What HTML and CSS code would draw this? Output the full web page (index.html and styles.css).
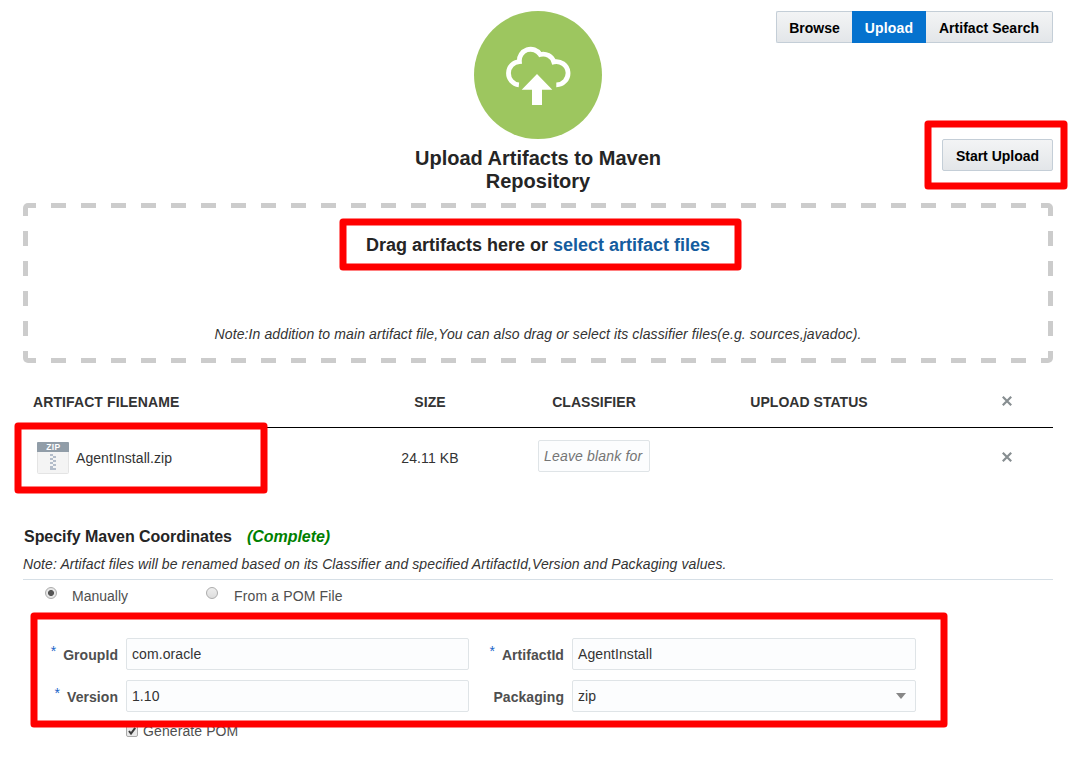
FILE: index.html
```html
<!DOCTYPE html>
<html lang="en">
<head>
<meta charset="utf-8">
<title>Upload Artifacts</title>
<link rel="stylesheet" href="styles.css">
</head>
<body>
<main class="page">
  <header class="head">
    <div class="intro">
      <svg class="badge" viewBox="0 0 128 128">
        <circle cx="64" cy="64" r="64" fill="#9dc65f"/>
        <path d="M44.9 73.9A11.7 11.7 0 0 1 45.4 50.6A11.3 11.3 0 0 1 66.2 43.5A11.2 11.2 0 0 1 79.8 50.9A11.6 11.6 0 1 1 82.3 73.8" fill="none" stroke="#fff" stroke-width="4.8"/>
        <path d="M63 63L78.3 78.8H68V94H58V78.8H47.7Z" fill="#fff"/>
      </svg>
      <h1 class="title">Upload Artifacts to Maven Repository</h1>
    </div>
    <div class="actions">
      <nav class="tabs">
        <button class="btn tab tab-browse">Browse</button><button class="btn tab tab-on">Upload</button><button class="btn tab tab-search">Artifact Search</button>
      </nav>
      <button class="btn start">Start Upload</button>
    </div>
  </header>

  <section class="drop">
    <svg class="dashes" viewBox="0 0 1030 160">
      <path d="M0 2.5H1030M0 157.5H1030M2.5 0V160M1027.5 0V160"/>
    </svg>
    <p class="drag">Drag artifacts here or <a class="link">select artifact files</a></p>
    <p class="note">Note:In addition to main artifact file,You can also drag or select its classifier files(e.g. sources,javadoc).</p>
  </section>

  <section class="table">
    <div class="row row-head">
      <div class="first">ARTIFACT FILENAME</div><div>SIZE</div><div>CLASSIFIER</div><div>UPLOAD STATUS</div>
      <div><svg class="x" viewBox="0 0 10 10"><path d="M.8 .8L9.2 9.2M9.2 .8L.8 9.2"/></svg></div>
    </div>
    <div class="row row-file">
      <div class="first file">
        <svg class="zip" viewBox="0 0 32 32">
          <rect x=".5" y=".5" width="31" height="31" rx="1" fill="#f4f4f4" stroke="#e4e4e4"/>
          <path d="M0 10V1a1 1 0 0 1 1-1H31a1 1 0 0 1 1 1V10Z" fill="#919da8"/>
          <text x="16.3" y="8" class="zip-text">ZIP</text>
          <path d="M13 12h3v2h-3zM16 14h3v2h-3zM13 16h3v2h-3zM16 18h3v2h-3zM13 20h3v2h-3zM16 22h3v2h-3zM13 24h3v2h3v2h-6z" fill="#b4bdca"/>
        </svg>
        <span>AgentInstall.zip</span>
      </div>
      <div class="size">24.11 KB</div>
      <div><div class="field blank">Leave blank for</div></div>
      <div></div>
      <div><svg class="x" viewBox="0 0 10 10"><path d="M.8 .8L9.2 9.2M9.2 .8L.8 9.2"/></svg></div>
    </div>
  </section>

  <section class="coords">
    <h2 class="subtitle"><span>Specify Maven Coordinates</span><em class="done">(Complete)</em></h2>
    <p class="hint">Note: Artifact files will be renamed based on its Classifier and specified ArtifactId,Version and Packaging values.</p>
    <div class="modes">
      <label class="mode"><i class="radio radio-on"></i><span>Manually</span></label>
      <label class="mode mode-pom"><i class="radio"></i><span>From a POM File</span></label>
    </div>
    <div class="form">
      <label class="label"><b class="star">*</b><span>GroupId</span></label><div class="field">com.oracle</div>
      <label class="label"><b class="star">*</b><span>ArtifactId</span></label><div class="field">AgentInstall</div>
      <label class="label"><b class="star">*</b><span>Version</span></label><div class="field">1.10</div>
      <label class="label"><span>Packaging</span></label><div class="field select"><span>zip</span><svg class="caret" viewBox="0 0 10 6"><path d="M0 0H10L5 6Z"/></svg></div>
    </div>
    <div class="pom">
      <svg class="check" viewBox="0 0 12 12"><rect x=".5" y=".5" width="11" height="11" rx="1.5" fill="#e9e9e9" stroke="#a9a9a9"/><path d="M3 6L5 8.6L9.2 2.8" fill="none" stroke="#3c3c3c" stroke-width="2"/></svg>
      <span>Generate POM</span>
    </div>
  </section>

  <svg class="marks" viewBox="0 0 1074 760">
    <rect x="928" y="124" width="136" height="62"/>
    <rect x="343" y="222" width="395" height="45"/>
    <rect x="18" y="426" width="246" height="64"/>
    <rect x="34" y="616" width="910" height="108"/>
  </svg>
</main>
</body>
</html>
```
FILE: styles.css
```css
* { box-sizing: border-box; }
body { margin: 0; background: #fff; color: #333; font: 14px/16px "Liberation Sans", Arial, sans-serif; }
h1, h2, p { margin: 0; }
.page { position: relative; width: 1074px; height: 760px; padding: 11px 21px 0 23px; overflow: hidden; }
.head { display: grid; grid-template-columns: 1fr 260px 1fr; height: 192px; }
.intro { grid-column: 2; display: flex; flex-direction: column; align-items: center; text-align: center; }
.badge { width: 128px; height: 128px; flex: none; }
.title { width: 260px; margin-top: 8px; font-size: 20px; line-height: 23px; color: #252525; }
.actions { display: flex; flex-direction: column; align-items: flex-end; gap: 96px; }
.tabs { display: flex; }
.btn { height: 32px; padding: 2px 0 0; border: 1px solid #c4ced7; border-radius: 2px; background: linear-gradient(#f3f4f5, #e3e6e9); color: #000; font: bold 14px/16px "Liberation Sans", Arial, sans-serif; white-space: nowrap; }
.tab-browse { width: 76px; border-right: 0; border-radius: 2px 0 0 2px; }
.tab-search { width: 127px; border-left: 0; border-radius: 0 2px 2px 0; letter-spacing: .04px; }
.tab-on { width: 74px; border-color: #0572ce; border-radius: 0; background: #0572ce; color: #fff; letter-spacing: .15px; }
.start { width: 111px; }
.drop { position: relative; width: 1030px; height: 160px; padding-top: 32px; text-align: center; }
.dashes { position: absolute; inset: 0; width: 1030px; height: 160px; border-radius: 5px; }
.dashes path { fill: none; stroke: #ccc; stroke-width: 5; stroke-dasharray: 15 15; stroke-dashoffset: 2; }
.drag { font-size: 18px; line-height: 21px; font-weight: bold; color: #252525; }
.link { color: #145c9e; }
.note { margin-top: 70px; font-style: italic; letter-spacing: .108px; }
.table { margin-top: 14px; width: 1030px; }
.row { display: grid; grid-template-columns: 306px 202px 126px 304px 92px; align-items: center; text-align: center; }
.row-head { height: 51px; border-bottom: 1px solid #000; font-weight: bold; letter-spacing: .04px; }
.row-head .first { letter-spacing: .1px; }
.row-file { height: 60px; }
.first { padding-left: 10px; text-align: left; }
.file { display: flex; align-items: center; gap: 7px; padding-left: 14px; letter-spacing: .07px; }
.size { letter-spacing: .12px; }
.zip { width: 32px; height: 32px; }
.zip-text { fill: #fff; font: bold 8.5px "Liberation Sans", Arial, sans-serif; letter-spacing: .3px; text-anchor: middle; }
.x { width: 10px; height: 10px; margin-bottom: 1px; }
.x path { fill: none; stroke: #878e91; stroke-width: 2.2; }
.field { display: flex; align-items: center; height: 32px; padding: 0 5px; border: 1px solid #dfe4e7; border-radius: 2px; background: #fcfdfe; letter-spacing: .08px; white-space: nowrap; }
.blank { width: 112px; margin: 0 auto 4px; color: #757575; font-style: italic; letter-spacing: .18px; }
.coords { margin-top: 39px; width: 1030px; }
.subtitle { display: flex; gap: 15px; padding-left: 1px; font-size: 16px; line-height: 19px; letter-spacing: -.04px; color: #252525; }
.done { color: #008000; }
.hint { margin-top: 10px; height: 24px; border-bottom: 1px solid #d6dfe6; font-style: italic; letter-spacing: .095px; }
.modes { display: flex; padding: 7px 0 0 22px; height: 58px; }
.mode { display: flex; align-items: flex-start; gap: 15px; width: 161px; color: #4f4f4f; white-space: nowrap; }
.mode span { padding-top: 1px; }
.mode-pom { gap: 16px; letter-spacing: .14px; }
.radio { width: 12px; height: 12px; border: 1px solid #acacac; border-radius: 50%; background: linear-gradient(#eee, #ddd); }
.radio-on { background: radial-gradient(circle, #555 0 2.6px, #e6e6e6 3.4px); }
.form { display: grid; grid-template-columns: 95px 343px 87px 344px; column-gap: 8px; row-gap: 10px; }
.label { display: flex; justify-content: flex-end; align-items: center; gap: 7px; padding-top: 2px; color: #4f4f4f; font-weight: bold; letter-spacing: .06px; white-space: nowrap; }
.star { align-self: flex-start; margin-top: 3px; color: #1b66c9; font-weight: normal; }
.select { justify-content: space-between; padding-right: 9px; }
.caret { width: 10px; height: 6px; fill: #878787; }
.pom { display: flex; align-items: center; gap: 5px; padding: 11px 0 0 103px; color: #4f4f4f; letter-spacing: .1px; }
.check { width: 12px; height: 12px; }
.marks { position: absolute; inset: 0; width: 1074px; height: 760px; pointer-events: none; }
.marks rect { fill: none; stroke: #f00; stroke-width: 7; stroke-linejoin: round; }
```
